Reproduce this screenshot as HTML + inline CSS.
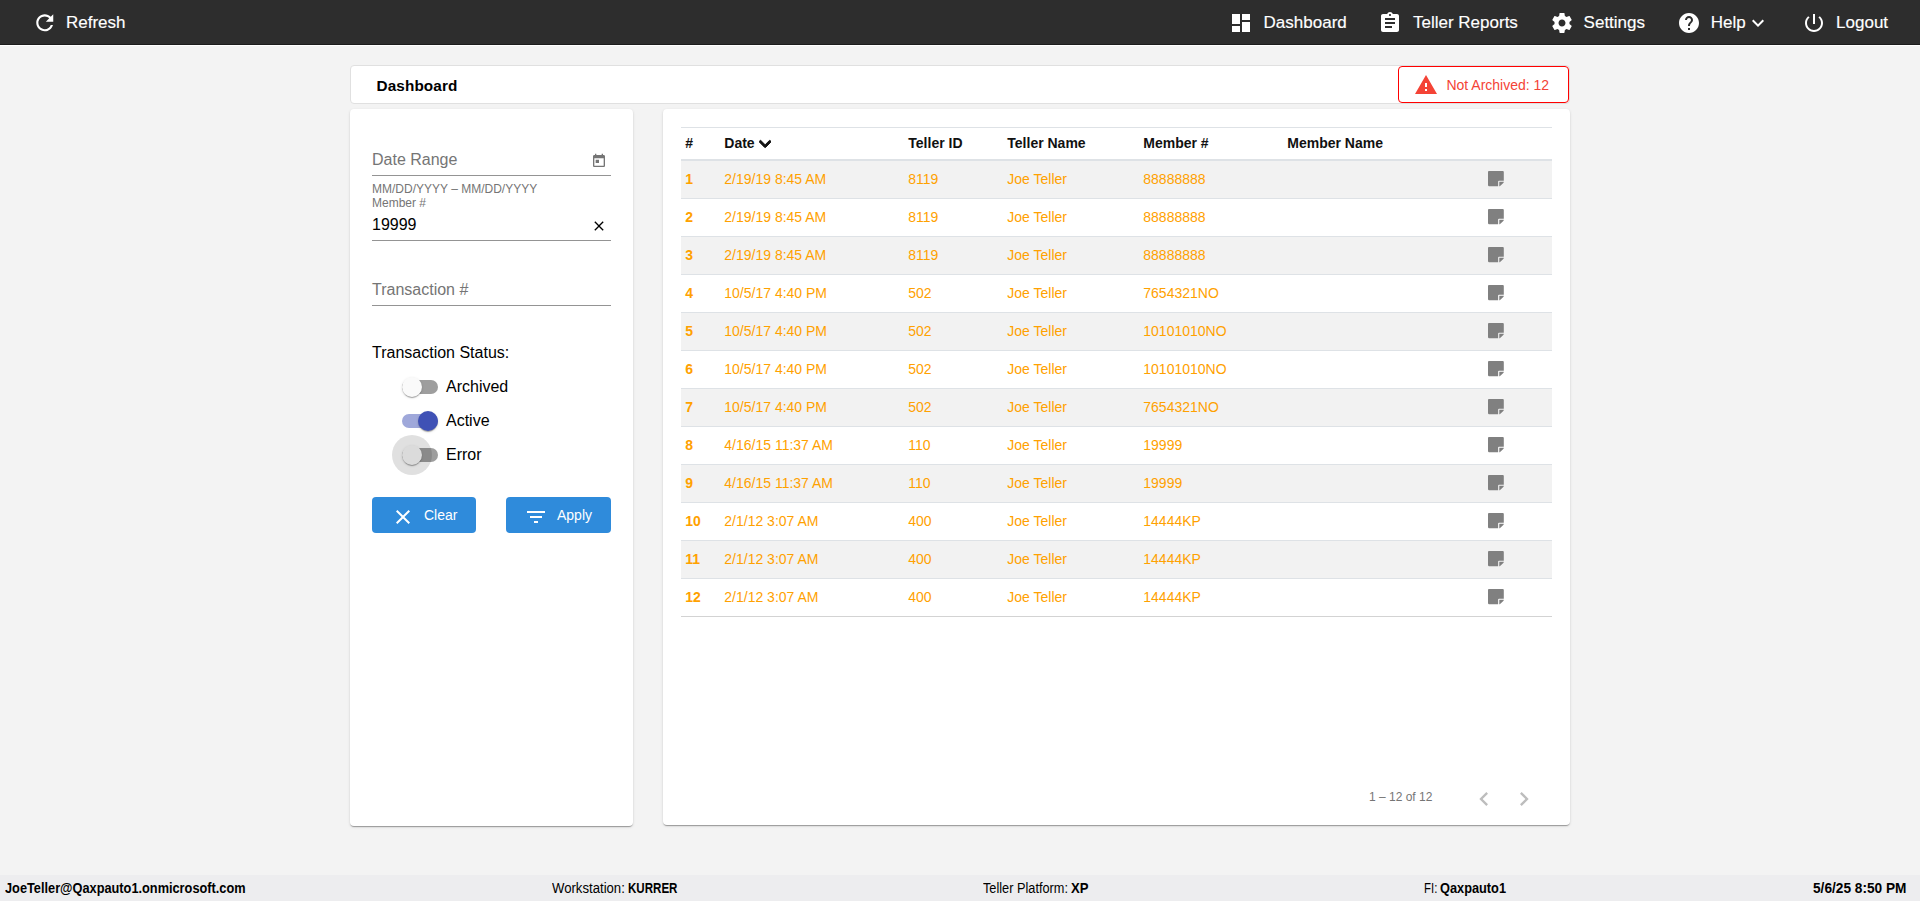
<!DOCTYPE html><html lang="en"><head><meta charset="utf-8"><title>Dashboard</title><style>
*{box-sizing:border-box}
html,body{margin:0;padding:0}
body{width:1920px;height:901px;overflow:hidden;background:#f3f3f3;font-family:"Liberation Sans",sans-serif;position:relative;color:#000}
.abs{position:absolute;white-space:nowrap}
.ic{position:absolute;display:block}
#nav{position:absolute;left:0;top:0;width:1920px;height:45px;background:#2d2d2d;border-bottom:1px solid #1c1c1c}
#navline{position:absolute;left:0;top:45px;width:1920px;height:1px;background:#fff}
.nt{position:absolute;color:#fff;font-size:17px;line-height:20px;top:13px;white-space:nowrap;-webkit-text-stroke:0.15px #fff}
#hdr{position:absolute;left:350px;top:65px;width:1220px;height:39px;background:#fff;border:1px solid #e0e0e0;border-radius:4px}
#hdr .t{position:absolute;left:25.5px;top:10px;font-weight:bold;font-size:15.3px;line-height:20px;letter-spacing:0.12px}
#na{position:absolute;left:1398px;top:66px;width:171px;height:37px;border:1px solid #ff0000;border-radius:4px;background:#fff}
#na .t{position:absolute;left:47.4px;top:10px;font-size:14px;line-height:16px;color:#f44336;white-space:nowrap}
.card{position:absolute;background:#fff;border-radius:4px;box-shadow:0 2px 1px -1px rgba(0,0,0,.2),0 1px 1px 0 rgba(0,0,0,.14),0 1px 3px 0 rgba(0,0,0,.12)}
#fc{left:350px;top:109px;width:283px;height:717px}
#tc{left:663px;top:109px;width:907px;height:716px}
.ul{position:absolute;left:22px;width:239px;height:1px;background:#949494}
.lbl{position:absolute;left:22px;font-size:16px;line-height:18px;color:#757575;white-space:nowrap}
.sm{position:absolute;left:22px;font-size:12px;line-height:14px;color:#757575;white-space:nowrap}
.bar{position:absolute;left:52px;width:36px;height:14px;border-radius:8px;background:#9e9e9e}
.thumb{position:absolute;width:20px;height:20px;border-radius:50%;background:#fafafa;box-shadow:0 2px 1px -1px rgba(0,0,0,.2),0 1px 1px 0 rgba(0,0,0,.14),0 1px 3px 0 rgba(0,0,0,.12)}
.tl{position:absolute;left:96px;font-size:16px;line-height:18px;white-space:nowrap}
.btn{position:absolute;top:388px;height:36px;border-radius:4px;background:#2f8bdb;color:#fff;font-size:14px}
.btn span{position:absolute;top:10px;line-height:16px;white-space:nowrap}
table{position:absolute;left:18px;top:18px;width:871px;border-collapse:separate;border-spacing:0;table-layout:fixed;font-size:14px}
th,td{padding:0 0 2px 4.3px;text-align:left;white-space:nowrap;overflow:hidden;vertical-align:middle}
th{height:34px;border-top:1px solid #dee2e6;border-bottom:2px solid #dee2e6;font-weight:bold;color:#111}
td{height:38px;border-top:1px solid #dee2e6;color:#ffa100}
tbody tr:first-child td{border-top:0;height:37px}
tbody tr:last-child td{border-bottom:1px solid #d3d3d3;height:39px}
tbody tr:nth-child(odd){background:#f2f2f2}
td.n{font-weight:bold}
td svg{display:block;margin-left:43.7px;position:relative;top:0.15px}
#pg{position:absolute;left:706px;top:681px;font-size:12px;line-height:14px;color:#757575;white-space:nowrap}
#foot{position:absolute;left:0;top:875px;width:1920px;height:26px;background:#ededef;font-size:14px}
#foot span{position:absolute;top:6px;line-height:15px;white-space:nowrap;transform-origin:0 50%;display:inline-block}
#foot .fb{font-weight:bold}
</style></head><body>
<div id="nav">
<svg class="ic" style="left:31.55px;top:10.05px;width:25.5px;height:25.5px;" viewBox="0 0 24 24"><path fill="#fff" d="M17.65 6.35C16.2 4.9 14.21 4 12 4c-4.42 0-7.99 3.58-7.99 8s3.57 8 7.99 8c3.73 0 6.84-2.55 7.73-6h-2.08c-.82 2.33-3.04 4-5.65 4-3.31 0-6-2.69-6-6s2.69-6 6-6c1.66 0 3.14.69 4.22 1.78L13 11h7V4l-2.35 2.35z"/></svg>
<span class="nt" style="left:66px">Refresh</span>
<svg class="ic" style="left:1229px;top:11px;width:24px;height:24px;" viewBox="0 0 24 24"><path fill="#fff" d="M3 13h8V3H3v10zm0 8h8v-6H3v6zm10 0h8V11h-8v10zm0-18v6h8V3h-8z"/></svg>
<span class="nt" style="left:1263.6px">Dashboard</span>
<svg class="ic" style="left:1378.2px;top:11px;width:24px;height:24px;" viewBox="0 0 24 24"><path fill="#fff" d="M19 3h-4.18C14.4 1.84 13.3 1 12 1c-1.3 0-2.4.84-2.82 2H5c-1.1 0-2 .9-2 2v14c0 1.1.9 2 2 2h14c1.1 0 2-.9 2-2V5c0-1.1-.9-2-2-2zm-7 0c.55 0 1 .45 1 1s-.45 1-1 1-1-.45-1-1 .45-1 1-1zm2 14H7v-2h7v2zm3-4H7v-2h10v2zm0-4H7V7h10v2z"/></svg>
<span class="nt" style="left:1413px">Teller Reports</span>
<svg class="ic" style="left:1549.5px;top:11px;width:24px;height:24px;" viewBox="0 0 24 24"><path fill="#fff" d="M19.43 12.98c.04-.32.07-.64.07-.98s-.03-.66-.07-.98l2.11-1.65c.19-.15.24-.42.12-.64l-2-3.46c-.12-.22-.39-.3-.61-.22l-2.49 1c-.52-.4-1.08-.73-1.69-.98l-.38-2.65C14.46 2.18 14.25 2 14 2h-4c-.25 0-.46.18-.49.42l-.38 2.65c-.61.25-1.17.59-1.69.98l-2.49-1c-.23-.09-.49 0-.61.22l-2 3.46c-.13.22-.07.49.12.64l2.11 1.65c-.04.32-.07.65-.07.98s.03.66.07.98l-2.11 1.65c-.19.15-.24.42-.12.64l2 3.46c.12.22.39.3.61.22l2.49-1c.52.4 1.08.73 1.69.98l.38 2.65c.03.24.24.42.49.42h4c.25 0 .46-.18.49-.42l.38-2.65c.61-.25 1.17-.59 1.69-.98l2.49 1c.23.09.49 0 .61-.22l2-3.46c.12-.22.07-.49-.12-.64l-2.11-1.65zM12 15.5c-1.93 0-3.5-1.57-3.5-3.5s1.57-3.5 3.5-3.5 3.5 1.57 3.5 3.5-1.57 3.5-3.5 3.5z"/></svg>
<span class="nt" style="left:1583.6px">Settings</span>
<svg class="ic" style="left:1677px;top:11px;width:24px;height:24px;" viewBox="0 0 24 24"><path fill="#fff" d="M12 2C6.48 2 2 6.48 2 12s4.48 10 10 10 10-4.48 10-10S17.52 2 12 2zm1 17h-2v-2h2v2zm2.07-7.75l-.9.92C13.45 12.9 13 13.5 13 15h-2v-.5c0-1.1.45-2.1 1.17-2.83l1.24-1.26c.37-.36.59-.86.59-1.41 0-1.1-.9-2-2-2s-2 .9-2 2H8c0-2.21 1.79-4 4-4s4 1.79 4 4c0 .88-.36 1.68-.93 2.25z"/></svg>
<span class="nt" style="left:1710.8px">Help</span>
<svg class="ic" style="left:1746px;top:10.5px;width:24px;height:24px;" viewBox="0 0 24 24"><path fill="#fff" d="M16.59 8.59L12 13.17 7.41 8.59 6 10l6 6 6-6z"/></svg>
<svg class="ic" style="left:1802px;top:11px;width:24px;height:24px;" viewBox="0 0 24 24"><path fill="#fff" d="M13 3h-2v10h2V3zm4.83 2.17l-1.42 1.42C17.99 7.86 19 9.81 19 12c0 3.87-3.13 7-7 7s-7-3.13-7-7c0-2.19 1.01-4.14 2.58-5.42L6.17 5.17C4.23 6.82 3 9.26 3 12c0 4.97 4.03 9 9 9s9-4.03 9-9c0-2.74-1.23-5.18-3.17-6.83z"/></svg>
<span class="nt" style="left:1836.1px">Logout</span>
</div><div id="navline"></div>
<div id="hdr"><span class="t">Dashboard</span></div>
<div id="na"><svg class="ic" style="left:15.4px;top:6px;width:24px;height:24px;" viewBox="0 0 24 24"><path fill="#f44336" d="M1 21h22L12 2 1 21zm12-3h-2v-2h2v2zm0-4h-2v-4h2v4z"/></svg><span class="t">Not Archived: 12</span></div>
<div class="card" id="fc">
<span class="lbl" style="top:42px">Date Range</span>
<svg class="ic" style="left:241px;top:44px;width:16px;height:16px;" viewBox="0 0 24 24"><path fill="#757575" d="M19 3h-1V1h-2v2H8V1H6v2H5c-1.11 0-1.99.9-1.99 2L3 19c0 1.1.89 2 2 2h14c1.1 0 2-.9 2-2V5c0-1.1-.9-2-2-2zm0 16H5V8h14v11zM7 10h5v5H7z"/></svg>
<div class="ul" style="top:66px"></div>
<span class="sm" style="top:73px">MM/DD/YYYY – MM/DD/YYYY</span>
<span class="sm" style="top:86.5px">Member #</span>
<span class="lbl" style="top:107px;color:#000">19999</span>
<svg class="ic" style="left:240.5px;top:109px;width:16px;height:16px;" viewBox="0 0 24 24"><path fill="#000" d="M19 6.41L17.59 5 12 10.59 6.41 5 5 6.41 10.59 12 5 17.59 6.41 19 12 13.41 17.59 19 19 17.59 13.41 12z"/></svg>
<div class="ul" style="top:131px"></div>
<span class="lbl" style="top:172px">Transaction #</span>
<div class="ul" style="top:196px"></div>
<span class="lbl" style="top:235px;color:#000">Transaction Status:</span>
<div class="bar" style="top:271px"></div><div class="thumb" style="left:52px;top:268px"></div><span class="tl" style="top:269px">Archived</span>
<div class="bar" style="top:305px;background:#9fa8da"></div><div class="thumb" style="left:68px;top:302px;background:#3f51b5"></div><span class="tl" style="top:303px">Active</span>
<div class="bar" style="top:339px"></div><div class="thumb" style="left:52px;top:336px"></div><div class="abs" style="left:42px;top:326px;width:40px;height:40px;border-radius:50%;background:rgba(0,0,0,.12)"></div><span class="tl" style="top:337px">Error</span>
<div class="btn" style="left:22px;width:104px"><svg class="ic" style="left:18.5px;top:8px;width:24px;height:24px;" viewBox="0 0 24 24"><path fill="#fff" d="M19 6.41L17.59 5 12 10.59 6.41 5 5 6.41 10.59 12 5 17.59 6.41 19 12 13.41 17.59 19 19 17.59 13.41 12z"/></svg><span style="left:52px">Clear</span></div>
<div class="btn" style="left:156px;width:105px"><svg class="ic" style="left:17.5px;top:8px;width:24px;height:24px;" viewBox="0 0 24 24"><path fill="#fff" d="M10 18h4v-2h-4v2zM3 6v2h18V6H3zm3 7h12v-2H6v2z"/></svg><span style="left:51px">Apply</span></div>
</div>
<div class="card" id="tc"><table><colgroup><col style="width:39px"><col style="width:184px"><col style="width:99px"><col style="width:136px"><col style="width:144px"><col style="width:157px"><col style="width:112px"></colgroup>
<thead><tr><th>#</th><th>Date <svg style="display:inline-block;vertical-align:-3px;margin-left:0.4px;width:12.25px;height:14px" viewBox="0 0 448 512"><path fill="#111" stroke="#111" stroke-width="34" stroke-linejoin="round" d="M207.029 381.476L12.686 187.132c-9.373-9.373-9.373-24.569 0-33.941l22.667-22.667c9.357-9.357 24.522-9.375 33.901-.04L224 284.505l154.745-154.021c9.379-9.335 24.544-9.317 33.901.04l22.667 22.667c9.373 9.373 9.373 24.569 0 33.941L240.971 381.476c-9.373 9.372-24.569 9.372-33.942 0z"/></svg></th><th>Teller ID</th><th>Teller Name</th><th>Member #</th><th>Member Name</th><th></th></tr></thead><tbody>
<tr><td class="n">1</td><td>2/19/19 8:45 AM</td><td>8119</td><td>Joe Teller</td><td>88888888</td><td></td><td><svg style="width:15.8px;height:17.26px" preserveAspectRatio="none" viewBox="0 0 448 512"><path fill="#808080" d="M312 320h136V56c0-13.3-10.700-24-24-24H24C10.700 32 0 42.700 0 56v400c0 13.300 10.700 24 24 24h264V344c0-13.200 10.800-24 24-24zm129 55l-98 98c-4.500 4.500-10.600 7-17 7h-6V352h128v6.100c0 6.300-2.500 12.400-7 16.900z"/></svg></td></tr>
<tr><td class="n">2</td><td>2/19/19 8:45 AM</td><td>8119</td><td>Joe Teller</td><td>88888888</td><td></td><td><svg style="width:15.8px;height:17.26px" preserveAspectRatio="none" viewBox="0 0 448 512"><path fill="#808080" d="M312 320h136V56c0-13.3-10.700-24-24-24H24C10.700 32 0 42.700 0 56v400c0 13.300 10.700 24 24 24h264V344c0-13.200 10.800-24 24-24zm129 55l-98 98c-4.500 4.500-10.600 7-17 7h-6V352h128v6.100c0 6.300-2.500 12.400-7 16.900z"/></svg></td></tr>
<tr><td class="n">3</td><td>2/19/19 8:45 AM</td><td>8119</td><td>Joe Teller</td><td>88888888</td><td></td><td><svg style="width:15.8px;height:17.26px" preserveAspectRatio="none" viewBox="0 0 448 512"><path fill="#808080" d="M312 320h136V56c0-13.3-10.700-24-24-24H24C10.700 32 0 42.700 0 56v400c0 13.300 10.700 24 24 24h264V344c0-13.200 10.800-24 24-24zm129 55l-98 98c-4.500 4.500-10.600 7-17 7h-6V352h128v6.100c0 6.300-2.500 12.400-7 16.900z"/></svg></td></tr>
<tr><td class="n">4</td><td>10/5/17 4:40 PM</td><td>502</td><td>Joe Teller</td><td>7654321NO</td><td></td><td><svg style="width:15.8px;height:17.26px" preserveAspectRatio="none" viewBox="0 0 448 512"><path fill="#808080" d="M312 320h136V56c0-13.3-10.700-24-24-24H24C10.700 32 0 42.700 0 56v400c0 13.300 10.700 24 24 24h264V344c0-13.200 10.800-24 24-24zm129 55l-98 98c-4.500 4.500-10.600 7-17 7h-6V352h128v6.100c0 6.300-2.500 12.400-7 16.900z"/></svg></td></tr>
<tr><td class="n">5</td><td>10/5/17 4:40 PM</td><td>502</td><td>Joe Teller</td><td>10101010NO</td><td></td><td><svg style="width:15.8px;height:17.26px" preserveAspectRatio="none" viewBox="0 0 448 512"><path fill="#808080" d="M312 320h136V56c0-13.3-10.700-24-24-24H24C10.700 32 0 42.700 0 56v400c0 13.300 10.700 24 24 24h264V344c0-13.200 10.800-24 24-24zm129 55l-98 98c-4.500 4.500-10.600 7-17 7h-6V352h128v6.100c0 6.300-2.500 12.400-7 16.900z"/></svg></td></tr>
<tr><td class="n">6</td><td>10/5/17 4:40 PM</td><td>502</td><td>Joe Teller</td><td>10101010NO</td><td></td><td><svg style="width:15.8px;height:17.26px" preserveAspectRatio="none" viewBox="0 0 448 512"><path fill="#808080" d="M312 320h136V56c0-13.3-10.700-24-24-24H24C10.700 32 0 42.700 0 56v400c0 13.300 10.700 24 24 24h264V344c0-13.200 10.800-24 24-24zm129 55l-98 98c-4.500 4.500-10.600 7-17 7h-6V352h128v6.100c0 6.300-2.500 12.400-7 16.900z"/></svg></td></tr>
<tr><td class="n">7</td><td>10/5/17 4:40 PM</td><td>502</td><td>Joe Teller</td><td>7654321NO</td><td></td><td><svg style="width:15.8px;height:17.26px" preserveAspectRatio="none" viewBox="0 0 448 512"><path fill="#808080" d="M312 320h136V56c0-13.3-10.700-24-24-24H24C10.700 32 0 42.700 0 56v400c0 13.300 10.700 24 24 24h264V344c0-13.200 10.800-24 24-24zm129 55l-98 98c-4.500 4.500-10.600 7-17 7h-6V352h128v6.100c0 6.300-2.500 12.400-7 16.900z"/></svg></td></tr>
<tr><td class="n">8</td><td>4/16/15 11:37 AM</td><td>110</td><td>Joe Teller</td><td>19999</td><td></td><td><svg style="width:15.8px;height:17.26px" preserveAspectRatio="none" viewBox="0 0 448 512"><path fill="#808080" d="M312 320h136V56c0-13.3-10.700-24-24-24H24C10.700 32 0 42.700 0 56v400c0 13.300 10.700 24 24 24h264V344c0-13.200 10.800-24 24-24zm129 55l-98 98c-4.500 4.500-10.600 7-17 7h-6V352h128v6.100c0 6.300-2.500 12.400-7 16.900z"/></svg></td></tr>
<tr><td class="n">9</td><td>4/16/15 11:37 AM</td><td>110</td><td>Joe Teller</td><td>19999</td><td></td><td><svg style="width:15.8px;height:17.26px" preserveAspectRatio="none" viewBox="0 0 448 512"><path fill="#808080" d="M312 320h136V56c0-13.3-10.700-24-24-24H24C10.700 32 0 42.700 0 56v400c0 13.300 10.700 24 24 24h264V344c0-13.200 10.800-24 24-24zm129 55l-98 98c-4.500 4.500-10.600 7-17 7h-6V352h128v6.100c0 6.300-2.500 12.400-7 16.900z"/></svg></td></tr>
<tr><td class="n">10</td><td>2/1/12 3:07 AM</td><td>400</td><td>Joe Teller</td><td>14444KP</td><td></td><td><svg style="width:15.8px;height:17.26px" preserveAspectRatio="none" viewBox="0 0 448 512"><path fill="#808080" d="M312 320h136V56c0-13.3-10.700-24-24-24H24C10.700 32 0 42.700 0 56v400c0 13.300 10.700 24 24 24h264V344c0-13.200 10.800-24 24-24zm129 55l-98 98c-4.500 4.500-10.600 7-17 7h-6V352h128v6.100c0 6.300-2.500 12.400-7 16.900z"/></svg></td></tr>
<tr><td class="n">11</td><td>2/1/12 3:07 AM</td><td>400</td><td>Joe Teller</td><td>14444KP</td><td></td><td><svg style="width:15.8px;height:17.26px" preserveAspectRatio="none" viewBox="0 0 448 512"><path fill="#808080" d="M312 320h136V56c0-13.3-10.700-24-24-24H24C10.700 32 0 42.700 0 56v400c0 13.300 10.700 24 24 24h264V344c0-13.200 10.800-24 24-24zm129 55l-98 98c-4.500 4.500-10.600 7-17 7h-6V352h128v6.100c0 6.300-2.500 12.400-7 16.900z"/></svg></td></tr>
<tr><td class="n">12</td><td>2/1/12 3:07 AM</td><td>400</td><td>Joe Teller</td><td>14444KP</td><td></td><td><svg style="width:15.8px;height:17.26px" preserveAspectRatio="none" viewBox="0 0 448 512"><path fill="#808080" d="M312 320h136V56c0-13.3-10.700-24-24-24H24C10.700 32 0 42.700 0 56v400c0 13.300 10.700 24 24 24h264V344c0-13.200 10.800-24 24-24zm129 55l-98 98c-4.500 4.500-10.600 7-17 7h-6V352h128v6.100c0 6.300-2.500 12.400-7 16.900z"/></svg></td></tr>
</tbody></table>
<span id="pg">1 – 12 of 12</span>
<svg class="ic" style="left:807.15px;top:676px;width:28px;height:28px;" viewBox="0 0 24 24"><path fill="#bdbdbd" d="M15.41 7.41L14 6l-6 6 6 6 1.41-1.41L10.83 12z"/></svg>
<svg class="ic" style="left:846.65px;top:676px;width:28px;height:28px;" viewBox="0 0 24 24"><path fill="#bdbdbd" d="M10 6L8.59 7.41 13.17 12l-4.58 4.59L10 18l6-6z"/></svg>
</div>
<div id="foot"><span class="fb" style="left:5px;transform:scaleX(0.9116)">JoeTeller@Qaxpauto1.onmicrosoft.com</span><span class="fn" style="left:551.5px;transform:scaleX(0.9393)">Workstation:</span><span class="fb" style="left:628px;transform:scaleX(0.8259)">KURRER</span><span class="fn" style="left:982.5px;transform:scaleX(0.9098)">Teller Platform:</span><span class="fb" style="left:1071px;transform:scaleX(0.9375)">XP</span><span class="fn" style="left:1423.5px;transform:scaleX(0.8161)">FI:</span><span class="fb" style="left:1440px;transform:scaleX(0.9125)">Qaxpauto1</span><span class="fb" style="left:1813px;transform:scaleX(0.9768)">5/6/25 8:50 PM</span></div>
</body></html>
